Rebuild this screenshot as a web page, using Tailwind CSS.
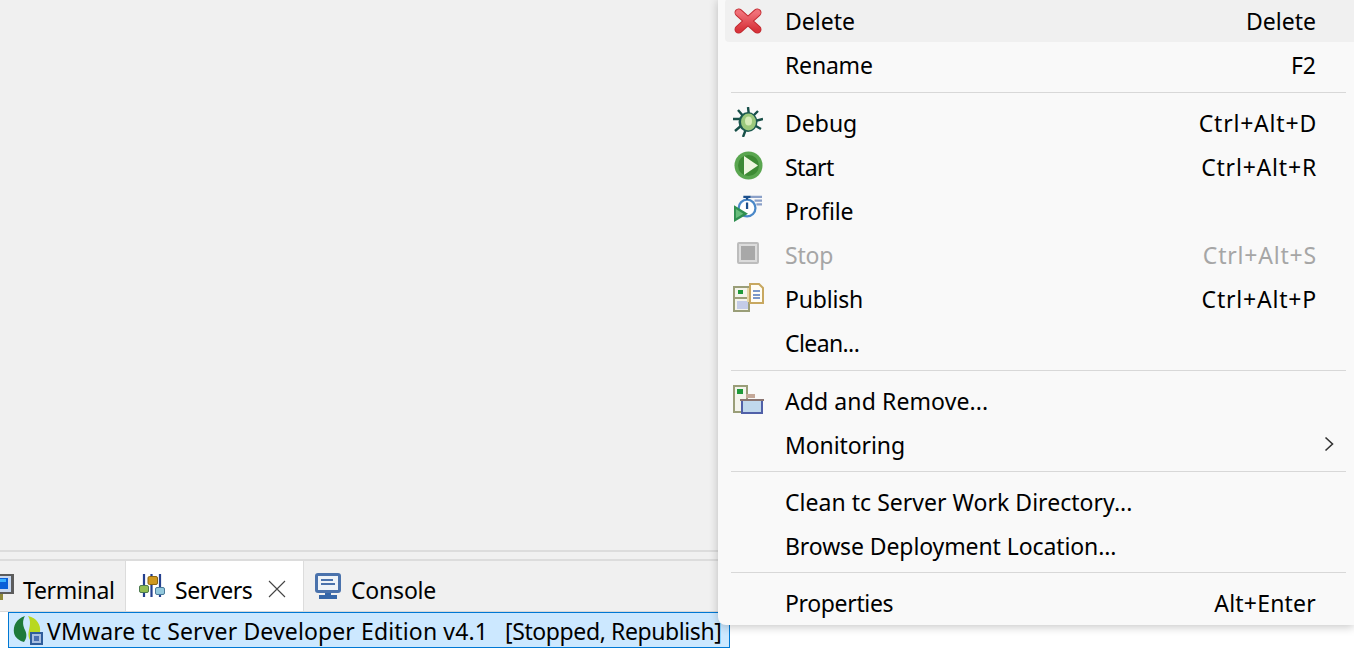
<!DOCTYPE html>
<html>
<head>
<meta charset="utf-8">
<script src="https://cdn.jsdelivr.net/npm/@tailwindcss/browser@4"></script>
</head>
<body class="w-[1354px] h-[654px] overflow-hidden bg-white text-[23px] text-black font-['Noto_Sans','Open_Sans',sans-serif]">
<div class="relative flex flex-col h-[654px]">
  <!-- editor area -->
  <div class="h-[550px] bg-[#f0f0f0]"></div>
  <div class="h-[11px] bg-[#f0f0f0] border-y-2 border-[#dcdcdc]"></div>

  <!-- view tabs -->
  <div class="flex h-[51px] bg-[#f0f0f0] border-b border-[#d8d8d8]">
    <div class="flex items-center w-[126px] border-r border-[#dcdcdc] overflow-hidden">
      <svg class="w-[14px] h-[28px] mr-[9px] shrink-0 mt-[4px]" viewBox="0 0 14 28">
        <rect x="-6" y="0" width="20" height="20" fill="#5c5c5c"/>
        <rect x="-6" y="2" width="17" height="16" fill="#c8d8f0"/>
        <rect x="-6" y="4" width="14" height="11" fill="#0a5fd8"/>
        <rect x="-6" y="5" width="12" height="3" fill="#38b0ff"/>
        <rect x="0" y="20" width="3" height="6" fill="#8f8a3a"/>
      </svg>
      <span class="pt-[8px] tracking-[-0.3px]">Terminal</span>
    </div>
    <div class="flex items-center w-[177px] pl-[13px] bg-white">
      <svg class="w-[26px] h-[24px] mr-[10px]" viewBox="0 0 26 24">
        <path d="M5 0v23M12.500 0v23M21 0v23" stroke="#24408f" stroke-width="2.200"/>
        <rect x="9" y="2.500" width="9.500" height="8" rx="1.500" fill="#cf981e" stroke="#8a6510"/>
        <rect x="0.500" y="11.500" width="9" height="7" rx="1.500" fill="#93bd52" stroke="#4c7a50"/>
        <rect x="16.500" y="13.500" width="9" height="7" rx="1.500" fill="#93c8dc" stroke="#4a7a9a"/>
      </svg>
      <span class="pt-[8px] tracking-[-0.4px]">Servers</span>
      <svg class="w-[18px] h-[18px] ml-[16px] mt-[5px]" viewBox="0 0 18 18">
        <path d="M1 1l16 16M17 1L1 17" stroke="#444" stroke-width="1.100" fill="none"/>
      </svg>
    </div>
    <div class="flex items-center pl-[11px] border-l border-[#dcdcdc]">
      <svg class="w-[26px] h-[26px] mr-[10px]" viewBox="0 0 26 26">
        <rect x="0" y="0" width="26" height="20" rx="3" fill="#4a72ac"/>
        <rect x="3" y="3" width="20" height="14" fill="#eef3f8"/>
        <path d="M6 7h12M6 11h14" stroke="#4a72ac" stroke-width="2"/>
        <path d="M10 20h6v2h6v4H4v-4h6z" fill="#3566a8"/>
      </svg>
      <span class="pt-[8px] tracking-[-0.2px]">Console</span>
    </div>
  </div>

  <!-- server list -->
  <div class="flex-1 bg-white pl-[8px]">
    <div class="flex items-center w-[722px] h-[36px] bg-[#cce8ff] border border-[#0078d4] pl-[3px] whitespace-pre overflow-hidden">
      <svg class="w-[32px] h-[32px] mr-[3px] shrink-0" viewBox="0 0 32 32">
        <path d="M13 2C4 5 1 12 2 19c1 5 6 8 10 9 3-4 3-8 1-12-2-4-3-9 0-14z" fill="#1e7a3a"/>
        <path d="M16 2c9 2 13 9 12 16-1 5-4 8-8 10-4-3-4-8-3-12 1-5 2-9-1-14z" fill="#b8d820"/>
        <rect x="18" y="18" width="13" height="13" fill="#2f5d9c"/>
        <rect x="20" y="20" width="9" height="9" fill="#a8bee0"/>
        <rect x="22" y="22" width="5" height="5" fill="#4a6fb0"/>
      </svg>
      <span class="pt-[2px] tracking-[0.13px]">VMware tc Server Developer Edition v4.1</span>
      <span class="pt-[2px] ml-[17px] tracking-[-0.4px]">[Stopped, Republish]</span>
    </div>
  </div>

  <!-- context menu -->
  <div class="absolute left-[718px] top-[-1px] w-[636px] h-[626px] bg-[#f9f9f9] rounded-bl-lg shadow-[0_2px_10px_rgba(0,0,0,0.22)] pl-[7px]">
    <div class="flex items-center h-[43px] bg-[#f0f0f0] rounded-l pr-[38px] mb-[1px]">
      <span class="flex justify-center items-center w-[46px]">
        <svg class="w-[28px] h-[26px]" viewBox="0 0 30 28">
          <defs><linearGradient id="x" x1="0" y1="0" x2="0" y2="1"><stop offset="0" stop-color="#f07078"/><stop offset="1" stop-color="#d8343c"/></linearGradient></defs>
          <path d="M5 5l20 18M25 5L5 23" stroke="#c0282e" stroke-width="9" stroke-linecap="round"/>
          <path d="M5 5l20 18M25 5L5 23" stroke="url(#x)" stroke-width="7" stroke-linecap="round"/>
        </svg>
      </span>
      <span class="ml-[14px] pt-[2px]">Delete</span><span class="ml-auto pt-[2px]">Delete</span>
    </div>
    <div class="flex items-center h-[44px] pr-[38px]"><span class="ml-[60px] tracking-[-0.2px]">Rename</span><span class="ml-auto">F2</span></div>
    <div class="h-[14px] pt-[5px] pl-[6px] pr-[8px]"><div class="w-full h-[1px] bg-[#d8d8d8]"></div></div>

    <div class="flex items-center h-[44px] pr-[38px]">
      <span class="flex justify-center items-center w-[46px] pb-[2px]">
        <svg class="w-[30px] h-[30px]" viewBox="0 0 30 30">
          <path d="M15 0l1 9M5 3l6 7M0 12h8M25 4l-6 6M30 12l-8 2M2 24l7-6M28 22l-7-4M10 30l3-8" stroke="#174f48" stroke-width="2.400"/>
          <ellipse cx="15" cy="15" rx="9.500" ry="10" fill="#1d5a50"/>
          <ellipse cx="15.500" cy="15" rx="7.500" ry="8.500" fill="#9cc97c"/>
          <ellipse cx="15.500" cy="14" rx="3.500" ry="4.500" fill="#d6ecb8"/>
        </svg>
      </span>
      <span class="ml-[14px]">Debug</span><span class="ml-auto -mr-[1px] tracking-[0.8px]">Ctrl+Alt+D</span>
    </div>
    <div class="flex items-center h-[44px] pr-[38px]">
      <span class="flex justify-center items-center w-[46px] pb-[4px]">
        <svg class="w-[29px] h-[29px]" viewBox="0 0 29 29">
          <circle cx="14.500" cy="14.500" r="14" fill="#5aa650"/>
          <circle cx="14.500" cy="14.500" r="10.500" fill="#3d8a34"/>
          <path d="M10 5l14 9.500L10 24z" fill="#eef6e0"/>
        </svg>
      </span>
      <span class="ml-[14px] tracking-[-0.6px]">Start</span><span class="ml-auto -mr-[1px] tracking-[0.8px]">Ctrl+Alt+R</span>
    </div>
    <div class="flex items-center h-[44px] pr-[38px]">
      <span class="flex justify-center items-center w-[46px] pb-[4px]">
        <svg class="w-[30px] h-[28px]" viewBox="0 0 32 30">
          <circle cx="15" cy="14" r="9" fill="#fff" stroke="#4a88c8" stroke-width="2.400"/>
          <path d="M11 2h8M15 2v3M15 8v7" stroke="#1c4f8c" stroke-width="2.400"/>
          <path d="M19 2h12M23 6h8M25 10h6" stroke="#8aa0c8" stroke-width="2.400"/>
          <path d="M1 11l15 9L1 29z" fill="#2f8f50"/>
          <path d="M3 15l8 5-8 5z" fill="#68bd7c"/>
        </svg>
      </span>
      <span class="ml-[14px] tracking-[-0.2px]">Profile</span>
    </div>
    <div class="flex items-center h-[44px] pr-[38px] text-[#a6a6a6]">
      <span class="flex justify-center items-center w-[46px] pb-[4px]">
        <svg class="w-[22px] h-[22px]" viewBox="0 0 22 22">
          <rect x="1" y="1" width="20" height="20" rx="1" fill="#dcdcdc" stroke="#bdbdbd" stroke-width="2"/>
          <rect x="4" y="4" width="14" height="14" fill="#a8a8a8"/>
        </svg>
      </span>
      <span class="ml-[14px] tracking-[-0.2px]">Stop</span><span class="ml-auto -mr-[1px] tracking-[0.8px]">Ctrl+Alt+S</span>
    </div>
    <div class="flex items-center h-[44px] pr-[38px]">
      <span class="flex justify-center items-center w-[46px] pb-[4px]">
        <svg class="w-[31px] h-[29px]" viewBox="0 0 31 29">
          <rect x="1" y="4" width="15" height="24" fill="#f4f4ec" stroke="#9a9e78" stroke-width="2"/>
          <rect x="5" y="7" width="5" height="4" fill="#1f9a3a"/>
          <path d="M1 15h15" stroke="#9a9e78" stroke-width="2"/>
          <rect x="4" y="18" width="11" height="8" fill="#c4cce8"/>
          <path d="M14 5h4v14h-4z" fill="#e8d8a8"/>
          <path d="M17 1h9l4 4v15H17z" fill="#fffdf4" stroke="#c8a860" stroke-width="2"/>
          <path d="M20 8h7M20 12h7M20 15h7" stroke="#7a98c8" stroke-width="2"/>
        </svg>
      </span>
      <span class="ml-[14px] tracking-[-0.2px]">Publish</span><span class="ml-auto -mr-[1px] tracking-[0.8px]">Ctrl+Alt+P</span>
    </div>
    <div class="flex items-center h-[44px] pr-[38px]"><span class="ml-[60px] tracking-[-0.6px]">Clean...</span></div>
    <div class="h-[14px] pt-[5px] pl-[6px] pr-[8px]"><div class="w-full h-[1px] bg-[#d8d8d8]"></div></div>

    <div class="flex items-center h-[44px] pr-[38px]">
      <span class="flex justify-center items-center w-[46px] pb-[4px]">
        <svg class="w-[31px] h-[29px]" viewBox="0 0 31 29">
          <rect x="1" y="1" width="13" height="26" fill="#f4f4ec" stroke="#9a9e78" stroke-width="2"/>
          <rect x="4" y="4" width="6" height="5" fill="#1f9a3a"/>
          <path d="M13 11h9" stroke="#c4a898" stroke-width="4"/>
          <rect x="9" y="15" width="20" height="13" fill="#c0d8ec" stroke="#5060a8" stroke-width="2"/>
          <path d="M7 15h24" stroke="#8a7470" stroke-width="2"/>
        </svg>
      </span>
      <span class="ml-[14px] tracking-[0.1px]">Add and Remove...</span>
    </div>
    <div class="flex items-center h-[44px] pr-[38px] relative">
      <span class="ml-[60px] tracking-[-0.1px]">Monitoring</span>
      <svg class="absolute left-[599px] top-[13px] w-[10px] h-[16px]" viewBox="0 0 10 16">
        <path d="M1.500 1.500L8.500 8l-7 6.500" stroke="#333" stroke-width="1.600" fill="none"/>
      </svg>
    </div>
    <div class="h-[13px] pt-[4px] pl-[6px] pr-[8px]"><div class="w-full h-[1px] bg-[#d8d8d8]"></div></div>

    <div class="flex items-center h-[44px]"><span class="ml-[60px] tracking-[0.03px]">Clean tc Server Work Directory...</span></div>
    <div class="flex items-center h-[44px]"><span class="ml-[60px] tracking-[-0.1px]">Browse Deployment Location...</span></div>
    <div class="h-[13px] pt-[4px] pl-[6px] pr-[8px]"><div class="w-full h-[1px] bg-[#d8d8d8]"></div></div>

    <div class="flex items-center h-[44px] pr-[38px]"><span class="ml-[60px] tracking-[-0.35px]">Properties</span><span class="ml-auto tracking-[0.2px]">Alt+Enter</span></div>
  </div>
</div>
</body>
</html>
